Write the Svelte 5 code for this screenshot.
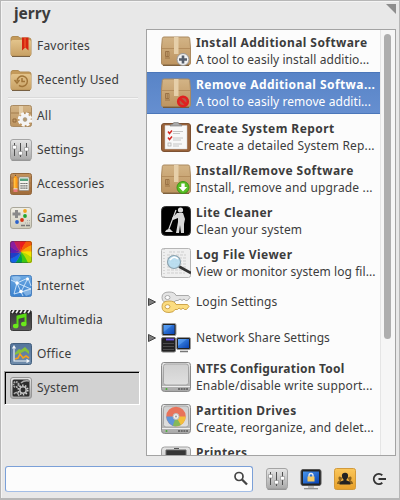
<script>
  const places = [
    { icon: 'favorites', label: 'Favorites' },
    { icon: 'recent', label: 'Recently Used' }
  ];
  const categories = [
    { icon: 'all', label: 'All' },
    { icon: 'settings', label: 'Settings' },
    { icon: 'accessories', label: 'Accessories' },
    { icon: 'games', label: 'Games' },
    { icon: 'graphics', label: 'Graphics' },
    { icon: 'internet', label: 'Internet' },
    { icon: 'multimedia', label: 'Multimedia' },
    { icon: 'office', label: 'Office' },
    { icon: 'system', label: 'System' }
  ];
  const apps = [
    { icon: 'install', title: 'Install Additional Software', sub: 'A tool to easily install additio...' },
    { icon: 'remove', title: 'Remove Additional Softwa...', sub: 'A tool to easily remove additi...' },
    { icon: 'report', title: 'Create System Report', sub: 'Create a detailed System Rep...', wide: true },
    { icon: 'download', title: 'Install/Remove Software', sub: 'Install, remove and upgrade ...', wide: true },
    { icon: 'cleaner', title: 'Lite Cleaner', sub: 'Clean your system', wide: true },
    { icon: 'log', title: 'Log File Viewer', sub: 'View or monitor system log fil...' },
    { icon: 'keys', group: 'Login Settings' },
    { icon: 'network', group: 'Network Share Settings' },
    { icon: 'drive', title: 'NTFS Configuration Tool', sub: 'Enable/disable write support...', wide: true, tight: true },
    { icon: 'partition', title: 'Partition Drives', sub: 'Create, reorganize, and delet...', wide: true },
    { icon: 'printer', title: 'Printers', sub: '' }
  ];
  const wheel = ['#f5e400', '#b4dc00', '#3cc814', '#00a04b', '#1464e6', '#1e3cc8', '#5a1eb4', '#8c1ea0', '#c81e5a', '#eb1e1e', '#f55a0a', '#faa00a'];
  const wedge = (i) => {
    const p = (a, r) => `${11 + r * Math.cos(a)} ${11 + r * Math.sin(a)}`;
    const a = (i * Math.PI) / 6;
    return `M11 11Q${p(a - 0.35, 6)} ${p(a, 17)}L${p(a + 0.55, 17)}Q${p(a + 0.2, 6)} 11 11Z`;
  };
  let selectedCategory = $state('System');
  let selectedApp = $state(1);
  let query = $state('');
</script>

{#snippet sliders()}
  <rect x="0.5" y="0.5" width="21" height="20.5" rx="2.5" fill="url(#silver)" stroke="#a4a4a4" />
  <path d="M1.5 21.3h19" stroke="#8a8a8a" />
  <path d="M4.500 4v13M10.500 4v14M16.500 4v13" stroke="#505050" />
  <path d="M2.500 6.500h4v3.500h-4zM8.500 12.500h4v3.500h-4zM14.500 8.500h4v3.500h-4z" fill="#fff" stroke="#888" stroke-width=".6" />
{/snippet}

{#snippet small(name)}
  <svg class="small" viewBox="0 0 22 22">
    {#if name === 'favorites' || name === 'recent'}
      <path d="M1 3.500q0-2 2-2h5l2 1.500h9q2 0 2 2v14q0 2-2 2H3q-2 0-2-2z" fill="#c49a5a" stroke="#b08b52" />
      <rect x="1" y="5" width="20" height="15.500" rx="1.500" fill="url(#folder)" />
      <path d="M2 21.500h18" stroke="#776043" />
      {#if name === 'favorites'}
        <path d="M12 2.500h6.500v13l-3.200-3-3.300 3z" fill="#d62410" /><path d="M15 2.500v10" stroke="#f46c32" />
      {:else}
        <path d="M7 12a5.200 5.200 0 1 1 2 4.300M4.500 11l2.500 3 2.500-3M12 9v3.500h3" fill="none" stroke="#a07438" stroke-width="1.500" />
      {/if}
    {:else if name === 'all'}
      <rect x=".5" y=".5" width="21" height="21" rx="2" fill="url(#box)" stroke="#a98a62" />
      <path d="M1 8h20" stroke="#a37c4d" /><path d="M9 1h4v9H9z" fill="#e2cba5" />
      <path d="M3 14h3v3H3z" fill="none" stroke="#92683b" />
      <circle cx="15" cy="14.500" r="5.500" fill="none" stroke="#f8f8f8" stroke-width="3.500" stroke-dasharray="2.700 1.620" />
      <circle cx="15" cy="14.500" r="3.800" fill="none" stroke="#f4f4f4" stroke-width="3.400" />
      <circle cx="15" cy="14.500" r="2" fill="#b59a70" stroke="#aaa" stroke-width=".5" />
    {:else if name === 'settings'}
      {@render sliders()}
    {:else if name === 'accessories'}
      <rect x=".5" y=".5" width="21" height="21" rx="2" fill="url(#wood)" stroke="#93673c" />
      <path d="M1 5h20M1 10h20M1 15h20" stroke="#966436" stroke-width=".5" />
      <path d="M3.500 5.500L5.500 2l2 3.500V17h-4z" fill="#ff9d18" /><path d="M4.800 5v12" stroke="#ffd058" />
      <path d="M5 3l.5-1.500L6 3z" fill="#333" /><rect x="3.500" y="16" width="4" height="3" fill="#ea7a7a" /><path d="M3.500 15.800h4" stroke="#ddd" />
      <rect x="9" y="4" width="10" height="13.500" rx="1" fill="#f2f2ec" stroke="#888" stroke-width=".6" />
      <rect x="10" y="5.500" width="8" height="2.500" fill="#55a17c" />
      <path d="M10.500 10.500h7M10.500 12.800h7M10.500 15.100h7" stroke="#4c4c4c" stroke-width="1.200" stroke-dasharray="1.200 .7" />
    {:else if name === 'games'}
      <rect x=".5" y=".5" width="21" height="21" rx="2.500" fill="url(#cream)" stroke="#aaa79a" />
      <path d="M5 3h3v2.500h2.500v3H8V11H5V8.500H2.500v-3H5z" fill="#8a8a8a" />
      <circle cx="15" cy="4" r="1.900" fill="#f0a41c" /><circle cx="15" cy="9" r="1.900" fill="#22a532" />
      <circle cx="12" cy="13" r="1.900" fill="#d83413" /><circle cx="7" cy="15" r="1.900" fill="#2c62cb" />
      <path d="M11 18.500h4M16 18.500h4" stroke="#777" stroke-width="1.500" /><path d="M15 16h5M17 13.500h4" stroke="#aaa" stroke-dasharray="1 1" />
    {:else if name === 'graphics'}
      <g clip-path="url(#round22)">
        <rect width="22" height="22" fill="#f5c800" />
        {#each wheel as colour, i}<path d={wedge(i)} fill={colour} />{/each}
      </g>
      <rect x=".5" y=".5" width="21" height="21" rx="2" fill="none" stroke="#333" stroke-opacity=".35" />
    {:else if name === 'internet'}
      <rect x=".5" y=".5" width="21" height="21" rx="2" fill="url(#sky)" stroke="#4a80be" />
      <path d="M2 2q7-2 9 1l-4 5-3-1zM13 17q1-3 8-4v6l-5 2z" fill="#c9e3f8" opacity=".45" />
      <path d="M7 8l11-5M7 8l4 9M11 17l7-14M7 8L1 5M7 8l-3 11M18 3l3 8M7 8l14 6" stroke="#e2f1ff" stroke-width=".8" />
      <path d="M11 17l10-3M11 17L4 19M11 17l2 4" stroke="#e2f1ff" stroke-width=".8" />
      <circle cx="7" cy="8" r="1.700" fill="#fff" /><circle cx="11" cy="16.500" r="1.800" fill="#fff" /><circle cx="17.500" cy="4" r="1.400" fill="#fff" />
    {:else if name === 'multimedia'}
      <rect x=".5" y="1.500" width="21" height="20" rx="2" fill="url(#dark)" stroke="#3a3a3a" />
      <path d="M1 1h20v3.500H1z" fill="#222" /><path d="M2 4l2-3M6 4l2-3M10 4l2-3M14 4l2-3M18 4l2-3" stroke="#eee" stroke-width="1.800" />
      <path d="M7.500 16.500V7.500l8-2V14" fill="none" stroke="#5bdc13" stroke-width="2" /><path d="M7.500 8.500l8-2" stroke="#5bdc13" stroke-width="3" />
      <ellipse cx="5.700" cy="17" rx="2.800" ry="2.300" fill="#6be91b" /><ellipse cx="13.800" cy="15" rx="2.800" ry="2.300" fill="#6be91b" />
    {:else if name === 'office'}
      <rect x=".5" y=".5" width="21" height="21" rx="2" fill="url(#slate)" stroke="#44607e" />
      <path d="M5 10l4-4 2 1 4-3 4 4v3l-4-3-4 2-4 1-2 1z" fill="#86c13c" />
      <path d="M5 16l3-1 2-4 3 4 3-2 3 2" fill="none" stroke="#f6a11b" stroke-width="1.600" />
      <path d="M4 4v14h14M2.500 5.500L4 3l1.500 2.500M16.500 16.500l2.500 1.500-2.500 1.500" fill="none" stroke="#f4f7fa" stroke-width="1.100" />
    {:else}
      <rect x=".5" y=".5" width="21" height="21" rx="2.500" fill="url(#silver)" stroke="#969696" />
      <rect x="2.500" y="2.500" width="17" height="17" rx="1.500" fill="#2d2d2d" />
      <circle cx="13" cy="13" r="4.700" fill="none" stroke="#cfcfcf" stroke-width="1.800" stroke-dasharray="1.500 1.450" />
      <circle cx="13" cy="13" r="3.200" fill="none" stroke="#bdbdbd" stroke-width="1.500" />
      <circle cx="6" cy="7.500" r="2.600" fill="none" stroke="#a9a9a9" stroke-width="2" stroke-dasharray="1.600 .8" />
      <path d="M11 6q3-3 8-2M4 17q3-4 5 2" stroke="#aaa" stroke-width="1.500" fill="none" />
    {/if}
  </svg>
{/snippet}

{#snippet carton()}
  <path d="M3 1h24q1.500 0 1.700 1.500L29.500 12v15q0 2-2 2h-25q-2 0-2-2V12l.8-9.500Q1.500 1 3 1z" fill="url(#box)" stroke="#ab8a60" />
  <path d="M1 12h28v1H1z" fill="#b48d5d" /><path d="M13 1h4.500v17H13z" fill="#e6cfa9" />
  <path d="M4.500 15.500h3.500v5H4.500zM4 22h5M6.200 15.500v5" stroke="#93693e" stroke-width=".8" fill="none" />
  <path d="M2 29.300h26" stroke="#745632" stroke-width="1.200" />
{/snippet}

{#snippet disk()}
  <path d="M2.500.5h25q2 0 2 3v23q0 3-3 3h-23q-3 0-3-3v-23q0-3 2-3z" fill="url(#silver)" stroke="#8a8a8a" />
  <rect x="2.500" y="2" width="25" height="21" rx="2.500" fill="url(#plate)" stroke="#a5a5a5" />
  <path d="M1 24.500h28" stroke="#eee" /><path d="M17 27h10" stroke="#555" stroke-width="1.500" stroke-dasharray="2 .7" /><circle cx="5.500" cy="27" r="1" fill="#49ad37" />
{/snippet}

{#snippet monitor(x, y)}
  <g transform="translate({x} {y})">
    <rect x=".5" y=".5" width="14" height="12" rx="1.500" fill="#222" stroke="#999" />
    <rect x="2" y="2" width="11" height="9" fill="url(#screen)" /><path d="M2 2h9L2 9z" fill="#6eb0ff" opacity=".45" />
  </g>
{/snippet}

{#snippet large(name)}
  <svg class="large" viewBox="0 0 30 30">
    {#if name === 'install' || name === 'remove' || name === 'download'}
      {@render carton()}
      {#if name === 'install'}
        <circle cx="22" cy="23.500" r="6" fill="#f1f1f1" stroke="#999" /><path d="M22 19.500v8M18 23.500h8" stroke="#555e6b" stroke-width="2.600" />
      {:else if name === 'remove'}
        <circle cx="22" cy="23.500" r="4.800" fill="#b65a45" stroke="#e02020" stroke-width="2.600" /><path d="M18.500 20l7 7" stroke="#e02020" stroke-width="2.600" />
      {:else}
        <circle cx="22" cy="23.500" r="6" fill="#59bf25" stroke="#3c9418" /><path d="M20.300 19.500h3.400v3.500h2.500L22 27.500 17.800 23h2.500z" fill="#fff" />
      {/if}
    {:else if name === 'report'}
      <rect x=".5" y="1.500" width="29" height="28" rx="2.500" fill="#9a633a" stroke="#7d5233" />
      <path d="M4 3.500h22V27H4z" fill="#f8f8f8" stroke="#ccc" stroke-width=".5" />
      <path d="M9 4q0-2 3-2 0-2 3-2t3 2q3 0 3 2z" fill="#aaa" stroke="#777" stroke-width=".6" />
      <path d="M7 9.500l1.500 2 2.500-3M7 15.500l1.500 2 2.500-3" fill="none" stroke="#d52a24" stroke-width="1.500" />
      <rect x="7" y="21" width="3" height="3" fill="none" stroke="#aaa" stroke-width=".7" />
      <path d="M12 9.500h10M12 11.500h7M12 16h10M12 18h8M12 22h9M12 24h6" stroke="#b8b8b8" stroke-width=".8" />
    {:else if name === 'cleaner'}
      <rect x=".5" y=".5" width="29" height="29" rx="4" fill="#000" stroke="#333" />
      <circle cx="19.500" cy="4" r="2.600" fill="#ddd" />
      <path d="M16 7h6l2 6-1 5v9h-3l-1-8-1 8h-3l2-11v-4l-5 2-1-2z" fill="#d7d7d7" />
      <path d="M15 4L7.500 24" stroke="#ddd" stroke-width="1.200" /><path d="M4 26q1-3 5-3l3 3z" fill="#ddd" />
    {:else if name === 'log'}
      <rect x=".5" y=".5" width="29" height="29" rx="2" fill="#efefef" stroke="#b5b5b5" />
      <path d="M3 1v28" stroke="#bbb" stroke-dasharray="1 2" />
      <path d="M8 4h6m2 0h8M6 7h7m2 0h10M6 10h19M6 13h19M6 16h19M6 19h19M6 22h15M6 25h18" stroke="#c2c2c2" stroke-width=".7" stroke-dasharray="3 1" />
      <path d="M18 18.500l12 6.500" stroke="#333" stroke-width="2.800" />
      <circle cx="13" cy="14" r="6.500" fill="#b5dcf0" fill-opacity=".9" stroke="#8aa1ad" stroke-width="1.100" /><path d="M9 12q4-5 8-1" stroke="#fff" fill="none" stroke-width="1.500" />
    {:else if name === 'keys'}
      <g fill-rule="evenodd" stroke-width=".9" stroke-linejoin="round">
        <path d="M8 5q6 0 7 3.500h12.500l1.500 2-2.500 3h-2l-1.500-1.500-2 1.500-2-1.500-2 1.500h-2Q13 16 8 16 1 16 1 10.500T8 5zM4 10.500a2.500 2 0 1 0 5 0 2.500 2 0 1 0-5 0z" fill="#e4e4e4" stroke="#a2a2a2" />
        <path d="M8 14q6 0 7 3.500h11.500l1.500 2-2.500 3h-2L22 21l-2 1.500-2-1.500-1.500 1.500H14Q13 25.500 8 25.500 1 25.500 1 19.700T8 14zM4 19.700a2.500 2 0 1 0 5 0 2.500 2 0 1 0-5 0z" fill="#fbdc80" stroke="#c89d3e" />
      </g>
    {:else if name === 'network'}
      {@render monitor(0.5, 0)}
      <rect x=".5" y="14.500" width="14" height="14.500" rx="1.500" fill="#222" stroke="#777" />
      <path d="M5 16.500h8" stroke="#6b52f4" stroke-width="1.800" /><path d="M2 20.500h11M2 23.500h11M2 26.500h11" stroke="#555" stroke-width=".8" />
      {@render monitor(15, 14)}
      <path d="M19 28.500h8" stroke="#777" stroke-width="1.500" />
    {:else if name === 'drive'}
      {@render disk()}
    {:else if name === 'partition'}
      {@render disk()}
      <g fill="none" stroke-width="7.500">
        <circle cx="15" cy="12.500" r="6" stroke="#e8735a" />
        <path d="M21 12.500a6 6 0 0 1-6 6" stroke="#f2bf3c" /><path d="M15 18.500a6 6 0 0 1-6-6" stroke="#5f95d8" />
        <path d="M18 17.700a6 6 0 0 1-5 .5" stroke="#85b85a" />
      </g>
      <circle cx="15" cy="12.500" r="3" fill="#eee" stroke="#bbb" /><circle cx="15" cy="12.500" r="1" fill="#999" />
    {:else}
      <rect x=".5" y="1" width="29" height="28" rx="3" fill="url(#silver)" stroke="#a0a0a0" />
      <path d="M5 4h20v16H5z" fill="#353535" stroke="#666" /><path d="M13 2.500h5" stroke="#555" />
    {/if}
  </svg>
{/snippet}

{#snippet categoryRow(item)}
  <button class="category" class:active={selectedCategory === item.label} onclick={() => (selectedCategory = item.label)}>
    {@render small(item.icon)}<span>{item.label}</span>
  </button>
{/snippet}

<svg class="defs" aria-hidden="true">
  <defs>
    <linearGradient id="silver" x2="0" y2="1"><stop stop-color="#e6e6e6" /><stop offset="1" stop-color="#a8a8a8" /></linearGradient>
    <linearGradient id="plate" x2="0" y2="1"><stop stop-color="#cfcfcf" /><stop offset="1" stop-color="#e0e0e0" /></linearGradient>
    <linearGradient id="folder" x2="0" y2="1"><stop stop-color="#e3c48c" /><stop offset="1" stop-color="#c8a165" /></linearGradient>
    <linearGradient id="box" x2="0" y2="1"><stop stop-color="#d3b486" /><stop offset="1" stop-color="#bd9460" /></linearGradient>
    <linearGradient id="wood" x2="0" y2="1"><stop stop-color="#c4935c" /><stop offset="1" stop-color="#9f6b3a" /></linearGradient>
    <linearGradient id="cream" x2="0" y2="1"><stop stop-color="#f1efe6" /><stop offset="1" stop-color="#cfccbc" /></linearGradient>
    <linearGradient id="sky" x2="0" y2="1"><stop stop-color="#6ba8e2" /><stop offset="1" stop-color="#3b82cf" /></linearGradient>
    <linearGradient id="dark" x2="0" y2="1"><stop stop-color="#333" /><stop offset="1" stop-color="#5a5a5a" /></linearGradient>
    <linearGradient id="slate" x2="0" y2="1"><stop stop-color="#54759c" /><stop offset="1" stop-color="#6f8cab" /></linearGradient>
    <linearGradient id="screen" x2="1" y2="1"><stop stop-color="#4896ec" /><stop offset="1" stop-color="#0842b4" /></linearGradient>
    <linearGradient id="amber" x2="0" y2="1"><stop stop-color="#fbc75b" /><stop offset="1" stop-color="#e7a02a" /></linearGradient>
    <clipPath id="round22"><rect width="22" height="22" rx="2.500" /></clipPath>
  </defs>
</svg>

<div class="menu">
  <header>
    <h1>jerry</h1>
    <svg class="grip" viewBox="0 0 10 10"><path d="M0 0h10v10z" fill="#8d8d8d" /></svg>
  </header>
  <main>
    <nav>
      {#each places as item}{@render categoryRow(item)}{/each}
      <div class="rule"></div>
      {#each categories as item}{@render categoryRow(item)}{/each}
    </nav>
    <section class="panel">
      <div class="apps">
        {#each apps as app, i}
          {#if app.group}
            <div class="app group">
              <svg class="arrow" viewBox="0 0 8 8"><path d="M.5.5L7.500 4 .5 7.500z" fill="#808080" stroke="#444" /></svg>
              {@render large(app.icon)}<span>{app.group}</span>
            </div>
          {:else}
            <button class="app" class:selected={selectedApp === i} onclick={() => (selectedApp = i)}>
              {@render large(app.icon)}
              <span class="text"><b class:tight={app.tight}>{app.title}</b><span class="sub" class:wide={app.wide}>{app.sub}</span></span>
            </button>
          {/if}
        {/each}
      </div>
      <div class="track"><div class="thumb"></div></div>
    </section>
  </main>
  <footer>
    <label class="search">
      <input bind:value={query} aria-label="Search" />
      <svg viewBox="0 0 16 16"><circle cx="6" cy="5.500" r="4" fill="none" stroke="#444" stroke-width="1.700" /><path d="M9 8.500l5 5" stroke="#444" stroke-width="2.300" /></svg>
    </label>
    <div class="actions">
      <svg viewBox="0 0 22 22">{@render sliders()}</svg>
      <svg viewBox="0 0 22 22">
        <rect x="1" y="1.500" width="20" height="16" rx="2" fill="#222" stroke="#555" /><rect x="3" y="3.500" width="16" height="12" fill="url(#screen)" />
        <path d="M9 9V7.500q0-2 2-2t2 2V9" fill="none" stroke="#eee" stroke-width="1.300" /><rect x="7.500" y="8.500" width="7" height="5" fill="#f4ca62" />
        <path d="M8 18h6v2H8z" fill="#bbb" /><path d="M4 20.700h14" stroke="#888" stroke-width="1.200" />
      </svg>
      <svg viewBox="0 0 22 22">
        <rect x=".5" y=".5" width="21" height="21" rx="2" fill="url(#amber)" stroke="#d29a3c" />
        <path d="M3 16q0-3 2.500-3.500Q4 11 4.500 9.500T7 9q2 1 0 3.500v3.500zM19 16q0-3-2.500-3.500 1.500-1.500 1-3T15 9q-2 1 0 3.500v3.500z" fill="#8d641f" />
        <path d="M5.500 16.500q0-3.500 4-4v-1Q7.700 10 7.900 7.500T11 4.800t3.100 2.700-1.600 4v1q4 .5 4 4z" fill="#222" />
      </svg>
      <svg viewBox="0 0 22 22"><path d="M14.300 7.200a5.100 5.100 0 1 0 0 7.600M10.500 11h7.500" fill="none" stroke="#333" stroke-width="1.900" /></svg>
    </div>
  </footer>
</div>

<style>
  :global(body) { margin: 0; }
  .defs { position: absolute; width: 0; height: 0; }
  .menu {
    box-sizing: border-box; width: 400px; height: 500px; overflow: hidden;
    display: flex; flex-direction: column;
    background: #e8e8e8; color: #3c3c3c;
    border: 1px solid #b7b7b7; border-bottom-width: 2px;
    box-shadow: inset 1px 1px #f4f4f4;
    font: 12px/16px "Noto Sans", "Open Sans", sans-serif; letter-spacing: .2px;
  }
  button { font: inherit; color: inherit; letter-spacing: inherit; border: 0; background: none; text-align: left; margin: 0; }
  svg { display: block; flex: none; }
  header { height: 28px; flex: none; display: flex; justify-content: space-between; padding: 3px 3px 0 13px; box-sizing: border-box; }
  h1 { margin: 0; font-size: 15.500px; line-height: 19px; letter-spacing: 0; }
  .grip { width: 10px; height: 10px; }
  main { height: 427px; flex: none; display: flex; justify-content: space-between; padding: 0 3px; }
  nav { width: 136px; display: flex; flex-direction: column; }
  .category { box-sizing: border-box; height: 34px; flex: none; padding: 0 0 0 4px; display: flex; align-items: center; gap: 5px; border: 2px solid transparent; }
  .category.active { background: #d2d2d2; border: 1px solid #fff; border-top-color: #a0a0a0; border-left-color: #a0a0a0; box-shadow: inset 1px 1px #000; padding-left: 5px; }
  .small { width: 22px; height: 22px; }
  .rule { height: 1px; flex: none; margin: 0 2px 0 4px; border-bottom: 1px solid #f6f6f6; background: #dadada; }
  .panel { box-sizing: border-box; width: 250px; border: 1px solid #a3a3a3; background: #fcfcfc; display: flex; overflow: hidden; }
  .apps { width: 233px; flex: none; }
  .app { box-sizing: border-box; width: 100%; height: 42px; padding: 0 0 0 14px; display: flex; align-items: center; gap: 5px; white-space: nowrap; overflow: hidden; }
  .app:nth-child(2) { margin-bottom: 2px; }
  .app.selected { color: #fff; background: linear-gradient(#5884c7, #668fd0); box-shadow: inset 0 1px #4b77ba, inset 0 -1px #4b77ba; }
  .large { width: 30px; height: 30px; }
  .text { display: flex; flex-direction: column; line-height: 17px; }
  .text b { letter-spacing: .43px; }
  .text b.tight { letter-spacing: .2px; }
  .sub { min-height: 17px; letter-spacing: .07px; }
  .sub.wide { letter-spacing: .16px; }
  .group { height: 36px; padding-left: 1px; letter-spacing: .07px; }
  .arrow { width: 8px; height: 8px; }
  .track { box-sizing: border-box; flex: 1; border-left: 1px solid #e5e5e5; background: #f6f6f6; padding: 4px 4px 0 3px; }
  .thumb { width: 7px; height: 305px; border-radius: 4px; background: #aeaeae; }
  footer { flex: 1; display: flex; align-items: flex-start; padding: 10px 8px 0 4px; }
  .search { box-sizing: border-box; width: 248px; height: 26px; border: 1px solid #7ba0d8; border-bottom-color: #a3bee6; border-radius: 3px; background: #fcfcfc; display: flex; align-items: center; padding-right: 3px; }
  .search input { flex: 1; min-width: 0; border: 0; outline: 0; background: none; font: inherit; }
  .search svg { width: 16px; height: 16px; }
  .actions { display: flex; gap: 12px; padding: 2px 0 0 13px; }
  .actions svg { width: 22px; height: 22px; }
</style>
